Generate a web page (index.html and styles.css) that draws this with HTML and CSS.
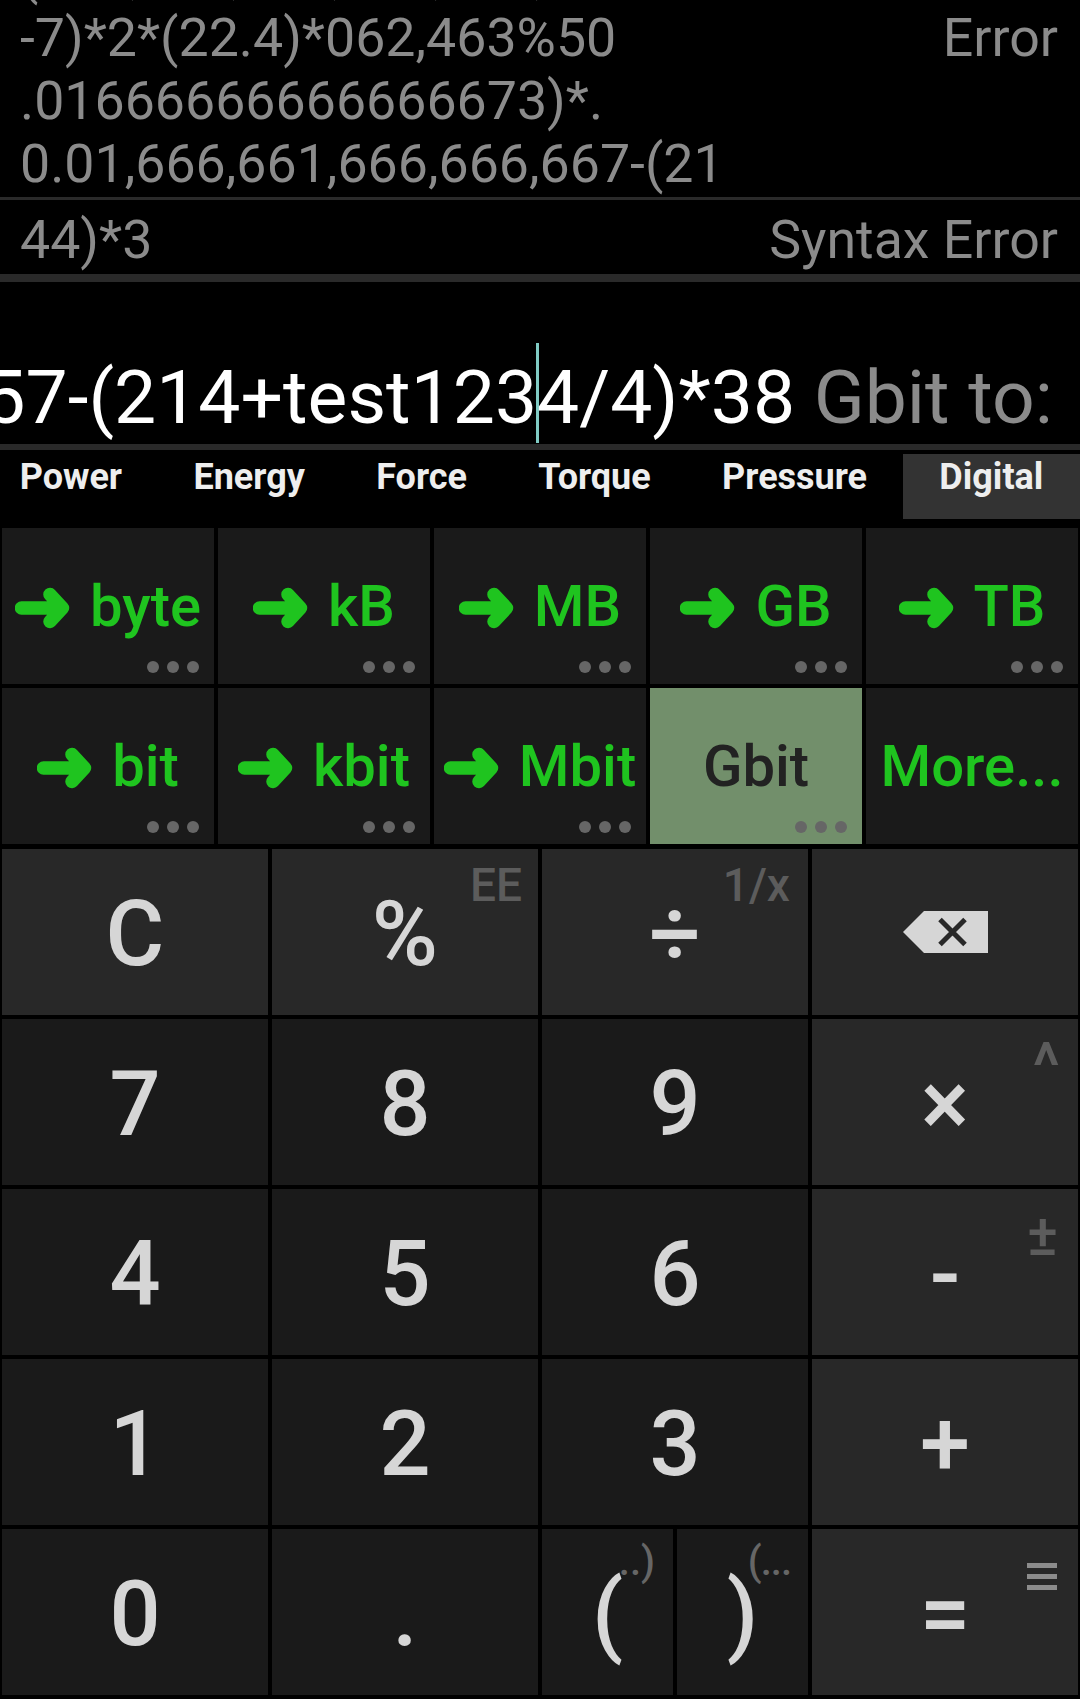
FILE: index.html
```html
<!DOCTYPE html>
<html>
<head>
<meta charset="utf-8">
<link rel="stylesheet" href="styles.css">
</head>
<body>
<div class="app">
  <div class="history">
    <div class="entry">
      <div class="expr">
        <div class="line">5*(21,333,333,333+14)*(62</div>
        <div class="line">(166,666,666,666,666,667-</div>
        <div class="line">-7)*2*(22.4)*062,463%50</div>
        <div class="line">.01666666666666673)*.</div>
        <div class="line">0.01,666,661,666,666,667-(21</div>
      </div>
      <div class="result">Error</div>
    </div>
    <div class="entry entry-last">
      <div class="expr">
        <div class="line">44)*3</div>
      </div>
      <div class="result">Syntax Error</div>
    </div>
  </div>

  <div class="input">
    <div class="input-text">0.01,666,661,666,666,657-(214+test123<span class="cursor"></span>4/4)*38<span class="hint"> Gbit to:</span></div>
  </div>

  <div class="sep"></div>

  <div class="tabs">
    <div class="tab">Power</div>
    <div class="tab">Energy</div>
    <div class="tab">Force</div>
    <div class="tab">Torque</div>
    <div class="tab">Pressure</div>
    <div class="tab tab-active">Digital</div>
  </div>

  <div class="units">
    <div class="unit"><svg class="arrow" viewBox="0 0 55 42"><path d="M6.5 21H47M35 7.5L47.5 21L35 34.5"/></svg><span>byte</span><div class="dots"><i></i><i></i><i></i></div></div>
    <div class="unit"><svg class="arrow" viewBox="0 0 55 42"><path d="M6.5 21H47M35 7.5L47.5 21L35 34.5"/></svg><span>kB</span><div class="dots"><i></i><i></i><i></i></div></div>
    <div class="unit"><svg class="arrow" viewBox="0 0 55 42"><path d="M6.5 21H47M35 7.5L47.5 21L35 34.5"/></svg><span>MB</span><div class="dots"><i></i><i></i><i></i></div></div>
    <div class="unit"><svg class="arrow" viewBox="0 0 55 42"><path d="M6.5 21H47M35 7.5L47.5 21L35 34.5"/></svg><span>GB</span><div class="dots"><i></i><i></i><i></i></div></div>
    <div class="unit"><svg class="arrow" viewBox="0 0 55 42"><path d="M6.5 21H47M35 7.5L47.5 21L35 34.5"/></svg><span>TB</span><div class="dots"><i></i><i></i><i></i></div></div>
    <div class="unit"><svg class="arrow" viewBox="0 0 55 42"><path d="M6.5 21H47M35 7.5L47.5 21L35 34.5"/></svg><span>bit</span><div class="dots"><i></i><i></i><i></i></div></div>
    <div class="unit"><svg class="arrow" viewBox="0 0 55 42"><path d="M6.5 21H47M35 7.5L47.5 21L35 34.5"/></svg><span>kbit</span><div class="dots"><i></i><i></i><i></i></div></div>
    <div class="unit"><svg class="arrow" viewBox="0 0 55 42"><path d="M6.5 21H47M35 7.5L47.5 21L35 34.5"/></svg><span>Mbit</span><div class="dots"><i></i><i></i><i></i></div></div>
    <div class="unit unit-current"><span>Gbit</span><div class="dots"><i></i><i></i><i></i></div></div>
    <div class="unit"><span>More...</span></div>
  </div>

  <div class="keys">
    <div class="key key-op">C</div>
    <div class="key key-op">%<span class="sup sup-ee">EE</span></div>
    <div class="key key-op">÷<span class="sup sup-inv">1/x</span></div>
    <div class="key key-op">
      <svg class="backspace" viewBox="0 0 85 42"><path class="bs-body" d="M0 21L21 0H85V42H21Z"/><path class="bs-x" d="M37 8.5L62 33.5M62 8.5L37 33.5"/></svg>
    </div>

    <div class="key">7</div>
    <div class="key">8</div>
    <div class="key">9</div>
    <div class="key key-op">×<span class="sup sup-pow">^</span></div>

    <div class="key">4</div>
    <div class="key">5</div>
    <div class="key">6</div>
    <div class="key key-op">-<span class="sup sup-pm">±</span></div>

    <div class="key">1</div>
    <div class="key">2</div>
    <div class="key">3</div>
    <div class="key key-op">+</div>

    <div class="key">0</div>
    <div class="key">.</div>
    <div class="pair">
      <div class="key">(<span class="sup sup-paren">..)</span></div>
      <div class="key">)<span class="sup sup-paren sup-paren-r">(...</span></div>
    </div>
    <div class="key key-op">=<svg class="sup-menu" viewBox="0 0 30 27"><rect x="0" y="0" width="30" height="5"/><rect x="0" y="11" width="30" height="5"/><rect x="0" y="22" width="30" height="5"/></svg></div>
  </div>
</div>
</body>
</html>
```

FILE: styles.css
```css
* {
  box-sizing: border-box;
  margin: 0;
  padding: 0;
}

html, body {
  background: #000;
}

body {
  width: 1080px;
  height: 1699px;
  overflow: hidden;
  font-family: Roboto, "Noto Sans", "DejaVu Sans", sans-serif;
}

.app {
  width: 1080px;
  height: 1699px;
  overflow: hidden;
}

/* ---------- history ---------- */
.history {
  height: 282px;
  display: flex;
  flex-direction: column;
  justify-content: flex-end;
  overflow: hidden;
}

.entry {
  flex-shrink: 0;
  display: flex;
  align-items: center;
  justify-content: space-between;
  padding: 8px 22px 2px 20px;
  border-bottom: 3px solid #2a2a2a;
  color: #8b8b8b;
  font-size: 53.7px;
  line-height: 63px;
}

.entry-last {
  padding-bottom: 3px;
  border-bottom-width: 8px;
}

.expr,
.result {
  white-space: nowrap;
}

/* ---------- input ---------- */
.input {
  height: 162px;
  display: flex;
  justify-content: flex-end;
  align-items: flex-end;
  overflow: hidden;
  padding: 0 27px 1px 0;
}

.input-text {
  flex-shrink: 0;
  white-space: nowrap;
  font-size: 75px;
  line-height: 75px;
  color: #fff;
}

.cursor {
  display: inline-block;
  width: 3px;
  height: 100px;
  margin: 0 -1.5px;
  vertical-align: -20px;
  background: #80cbc4;
}

.hint {
  color: #8b8b8b;
}

.sep {
  height: 6px;
  background: #2a2a2a;
}

/* ---------- tabs ---------- */
.tabs {
  height: 76px;
  display: flex;
  padding-top: 4px;
  margin-left: -16px;
}

.tab {
  flex-shrink: 0;
  height: 65px;
  padding: 3px 35.7px 0;
  font-size: 36px;
  font-weight: 700;
  line-height: 40px;
  color: #eeeeee;
  white-space: nowrap;
  text-align: center;
}

.tab-active {
  flex-grow: 1;
  background: #333333;
}

/* ---------- unit buttons ---------- */
.units {
  display: grid;
  grid-template-columns: repeat(5, 1fr);
  grid-auto-rows: 156px;
  gap: 4px;
  padding: 2px;
}

.unit {
  position: relative;
  display: flex;
  align-items: center;
  justify-content: center;
  gap: 20px;
  background: #1a1a1a;
  color: #1fc41f;
  font-size: 58px;
  font-weight: 500;
  line-height: 1;
  white-space: nowrap;
}

.arrow {
  width: 55px;
  height: 42px;
  flex-shrink: 0;
  margin-top: 3px;
}

.arrow path {
  fill: none;
  stroke: currentColor;
  stroke-width: 13.5;
  stroke-linecap: round;
  stroke-linejoin: round;
}

.unit-current {
  background: #728f6b;
  color: #222222;
}

.dots {
  position: absolute;
  right: 15px;
  bottom: 11px;
  display: flex;
  gap: 8px;
}

.dots i {
  display: block;
  width: 12px;
  height: 12px;
  border-radius: 50%;
  background: #666666;
}

/* ---------- keypad ---------- */
.keys {
  display: grid;
  grid-template-columns: repeat(4, 1fr);
  grid-auto-rows: 166px;
  gap: 4px;
  padding: 3px 2px 2px;
}

.key {
  position: relative;
  display: flex;
  align-items: center;
  justify-content: center;
  padding-top: 6px;
  background: #1a1a1a;
  color: #d6d6d6;
  font-size: 90px;
  font-weight: 500;
  line-height: 1;
}

.key-op {
  background: #282828;
}

.pair {
  display: flex;
  gap: 4px;
}

.pair .key {
  flex: 1;
}

.sup {
  position: absolute;
  top: 13px;
  right: 16px;
  font-size: 46px;
  line-height: 1;
  color: #5c5c5c;
}

.sup-inv {
  right: 18px;
}

.sup-pow {
  top: 16px;
  right: 18px;
  font-size: 64px;
}

.sup-pm {
  top: 17px;
  right: 20px;
  font-size: 58px;
}

.sup-paren {
  top: 13px;
  right: 18px;
  font-size: 40px;
  color: #666666;
}

.sup-paren-r {
  right: 17px;
  letter-spacing: -1px;
}

.sup-menu {
  position: absolute;
  top: 34px;
  right: 21px;
  width: 30px;
  height: 27px;
  fill: #8c8c8c;
}

.backspace {
  width: 85px;
  height: 42px;
  margin-top: -6px;
}

.bs-body {
  fill: #d6d6d6;
}

.bs-x {
  fill: none;
  stroke: #282828;
  stroke-width: 5;
}
```
